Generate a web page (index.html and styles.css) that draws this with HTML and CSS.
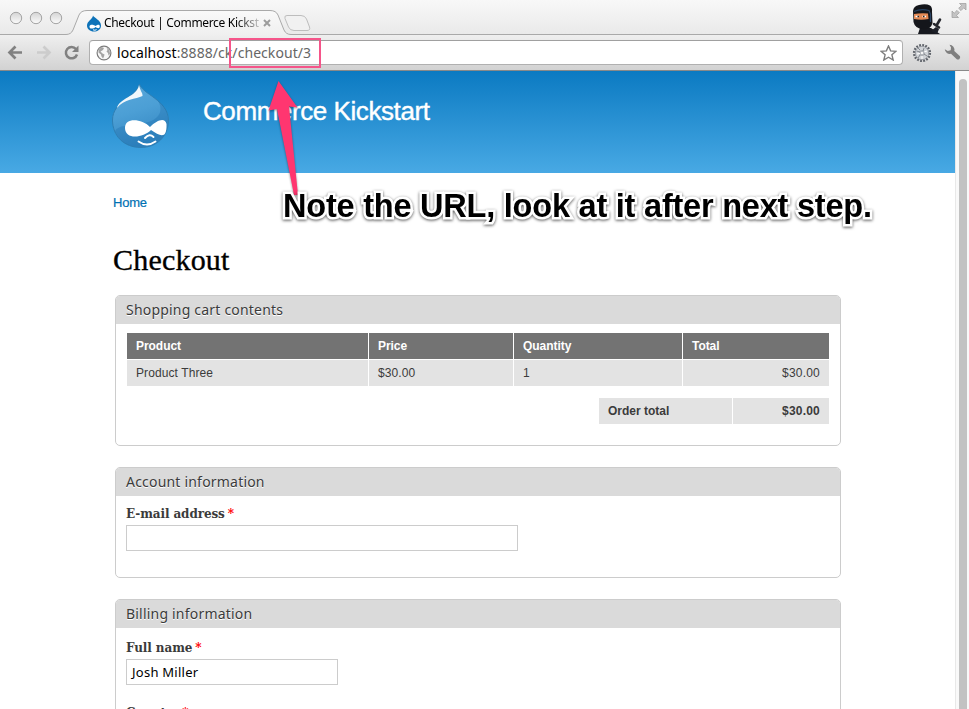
FILE: index.html
```html
<!DOCTYPE html>
<html lang="en">
<head>
<meta charset="utf-8">
<title>Checkout | Commerce Kickstart</title>
<link rel="stylesheet" href="styles.css">
</head>
<body>
<div class="window">
  <div class="tabstrip">
    <svg class="tabshape" width="969" height="36" viewBox="0 0 969 36">
      <defs><linearGradient id="tab" x1="0" y1="0" x2="0" y2="1"><stop offset="0" stop-color="#f9f9f9"/><stop offset="1" stop-color="#efefef"/></linearGradient>
      <linearGradient id="lamp" x1="0" y1="0" x2="0" y2="1"><stop offset="0" stop-color="#d4d4d4"/><stop offset="1" stop-color="#fcfcfc"/></linearGradient></defs>
      <path d="M0 34.5H66Q71 34.5 73 30L79 15Q81 10.500 87 10.500H270Q276 10.500 278 15L284 30Q286 34.500 291 34.500H969V36H0Z" fill="url(#tab)"/>
      <path d="M0 34.500H66Q71 34.500 73 30L79 15Q81 10.500 87 10.500H270Q276 10.500 278 15L284 30Q286 34.500 291 34.500H969" fill="none" stroke="#a9a9a9"/>
      <path d="M287 15.500H301Q305 15.500 306.500 19L309.500 27Q310.500 30.500 307 30.500H294Q290 30.500 288.500 27L285 18.500Q284 15.500 287 15.500Z" fill="#f1f1f1" stroke="#bdbdbd"/>
      <g fill="url(#lamp)" stroke="#a4a4a4"><circle cx="16" cy="18" r="5.700"/><circle cx="36" cy="18" r="5.700"/><circle cx="56" cy="18" r="5.700"/></g>
    </svg>
    <div class="tab">
      <svg class="favicon" width="16" height="17" viewBox="0 0 16 17"><path d="M7 .5C8 3 15 5 15 10.500C15 14.500 11.500 16.500 8 16.500C4 16.500 1 14 1 10.500C1 6 6.500 4.500 7 .5Z" fill="#0e73b9"/><path d="M3.500 11.700c0-3 4.500-2.300 6-.6 1.500-1.500 4.500-2.400 4.300.4-.2 2.700-2.800 1.600-4.300.5-1.600 1.700-6 2.600-6-.3Z" fill="#fff"/><path d="M7 14.800q2 1 3.600-.2" stroke="#fff" fill="none"/></svg>
      <span class="tabtitle">Checkout | Commerce Kickst</span>
      <svg class="close" width="8" height="8" viewBox="0 0 8 8"><path d="M1 1L7 7M7 1L1 7" stroke="#9c9c9c" stroke-width="2"/></svg>
    </div>
    <svg class="ninja" width="34" height="35" viewBox="0 0 34 35">
      <path d="M7 34L9 28H20L29 34Z" fill="#17191f"/>
      <path d="M20 31L25 27L28 29L26 34" fill="#1c1f27"/>
      <path d="M23 24L28 27.500M25.500 25.500L29 19.500" stroke="#24262c" stroke-width="2.600" stroke-linecap="round"/>
      <path d="M2 11Q2.500 6 8 5Q15 3.500 19 5.500Q21.500 7 21 12L21.500 23Q20 29 13 29.500Q4 29 2.500 22Z" fill="#14161b"/>
      <path d="M3 14Q9 13 17 13.500L17.500 19Q10 20.500 3 19Z" fill="#e58a55"/>
      <path d="M4.500 16.500H8M11.500 16.500H15" stroke="#fff" stroke-width="1.600"/><path d="M6.500 16.500H8M12 16.500H13.500" stroke="#222" stroke-width="1.600"/>
      <path d="M3 11.500Q10 8.500 18 10.500L19.500 14V22" stroke="#294363" stroke-width="1.200" fill="none"/>
    </svg>
    <svg class="expand" width="16" height="15" viewBox="0 0 16 15"><path d="M8.500.5H15V7L12.800 4.800L10 7.600L7.700 5.300L10.600 2.500ZM1 8L3.200 10.200L6 7.400L8.300 9.700L5.400 12.500L7.500 14.500H1Z" fill="#c4c4c4" stroke="#9b9b9b" stroke-width=".7"/></svg>
  </div>
  <div class="toolbar">
    <svg class="nav" width="90" height="35" viewBox="0 0 90 35">
      <path d="M22 17.500H10M15.500 11.500L9.500 17.500L15.500 23.500" fill="none" stroke="#818181" stroke-width="2.700"/>
      <path d="M37 17.500H49M43.500 11.500L49.500 17.500L43.500 23.500" fill="none" stroke="#cccccc" stroke-width="2.700"/>
      <path d="M76 14A5.700 5.700 0 1 0 77 19.500" fill="none" stroke="#818181" stroke-width="2.500"/><path d="M78.500 10.500V17H72Z" fill="#818181"/>
    </svg>
    <div class="omnibox">
      <svg class="globe" width="16" height="16" viewBox="0 0 16 16"><circle cx="8" cy="8" r="6.900" fill="#f7f7f7" stroke="#7c7c7c" stroke-width="1.200"/><path d="M2.500 5L5.500 2L8 3L7 5L4.500 6.500L6.500 8.500L8.500 9.500L8 11.500L7 13.500L5.500 11.500L5 9.500L2.500 7.500ZM10.500 2.500L13.500 5L14 9L12.500 10.500L12 8L10.500 6.500L11.500 5Z" fill="#a4a4a4"/></svg>
      <span class="url"><b>localhost</b>:8888/ck/checkout/3</span>
      <svg class="star" width="17" height="16" viewBox="0 0 17 16"><path d="M8.500 1L10.600 5.900L16 6.300L11.900 9.800L13.200 15L8.500 12.200L3.800 15L5.100 9.800L1 6.300L6.400 5.900Z" fill="#fff" stroke="#7c7c7c" stroke-width="1.400"/></svg>
    </div>
    <svg class="gear" width="20" height="20" viewBox="0 0 20 20"><circle cx="10" cy="10" r="7.800" fill="none" stroke="#5f636a" stroke-width="2.600" stroke-dasharray="1.800 1.263"/><circle cx="10" cy="10" r="6.700" fill="#d0d3d7" stroke="#8d9198" stroke-width=".8"/><circle cx="10" cy="10" r="3" fill="#a9adb3"/><path d="M4.500 8L8 9M12 11L15 13M12 5L11 8M8 12L6 15M6 5L8 7" stroke="#85898f"/><path d="M5 11L8 10.500M12 9L15 8M10 13V16" stroke="#fff"/><circle cx="10" cy="10" r="1.300" fill="#f4f4f4"/></svg>
    <svg class="wrench" width="17" height="17" viewBox="0 0 17 17"><path d="M5.500.8A5 5 0 0 1 10.300 7L16 12.300Q16.700 14 15.200 15.200Q13.700 16 12.500 15L7 9.800A5 5 0 0 1 .8 5.200L3.800 7L6.700 6.300L7 3.500Z" fill="#7f7f7f"/></svg>
  </div>
  <div class="viewport">
    <main class="page">
      <header class="header">
        <svg class="logo" width="60" height="66" viewBox="0 0 60 66">
          <defs><linearGradient id="drop" x1="0" y1="0" x2=".3" y2="1"><stop offset="0" stop-color="#5aa9dc"/><stop offset=".5" stop-color="#4c9fd5"/><stop offset="1" stop-color="#3487c2"/></linearGradient></defs>
          <path d="M28.500 1C31 11 57 17 57.500 37C57.500 54 45 64.500 30 64.500C13 64.500 1.500 53 1.500 37C1.500 18 26 14 28.500 1Z" fill="url(#drop)" stroke="#2f7fb3"/>
          <path d="M47 18C53 28 48 37 34 40C18 43 7 42 4 48C9 60 18 64 30 64C45 64 57 54 57 37C57 29 53 22 47 18Z" fill="#1c70ae" opacity=".35"/>
          <path d="M28 2C29 8 32 10 31.500 13C25 16 13 16 6 25C8 15 26 14 28 2Z" fill="#fff" opacity=".92"/>
          <path d="M14 45C14 34 31 36 39 44C46 37 54 34 55.500 41C56 57 49 53 40 47C32 55 14 57 14 45Z" fill="#fff"/>
          <path d="M34 55Q38.500 50 42.500 54M27.500 58.500Q36 64.500 44.500 58.500" fill="none" stroke="#fff" stroke-width="1.900" stroke-linecap="round"/>
        </svg>
        <div class="sitename">Commerce Kickstart</div>
      </header>
      <div class="content">
        <nav class="crumb"><a>Home</a></nav>
        <h1>Checkout</h1>
        <section class="fieldset cart">
          <h2>Shopping cart contents</h2>
          <div class="body">
            <div class="row head"><div>Product</div><div>Price</div><div>Quantity</div><div>Total</div></div>
            <div class="row"><div>Product Three</div><div>$30.00</div><div>1</div><div class="num">$30.00</div></div>
            <div class="total"><div>Order total</div><div class="num">$30.00</div></div>
          </div>
        </section>
        <section class="fieldset account">
          <h2>Account information</h2>
          <div class="body"><label>E-mail address <i>*</i></label><div class="input wide"></div></div>
        </section>
        <section class="fieldset billing">
          <h2>Billing information</h2>
          <div class="body"><label class="name">Full name <i>*</i></label><div class="input">Josh Miller</div><label class="country">Country <i>*</i></label></div>
        </section>
      </div>
    </main>
    <div class="scrollbar"><div class="thumb"></div></div>
  </div>
  <div class="urlmark"></div>
  <svg class="arrow" width="60" height="120" viewBox="0 0 60 120"><path d="M18.500 6L37.500 32.500L29 31.500L38 120H34L17 34L8.500 35.500Z" fill="#ff3670"/></svg>
  <div class="note">Note the URL, look at it after next step.</div>
</div>
</body>
</html>
```
FILE: styles.css
```css
* { box-sizing: border-box; }
body { margin: 0; background: #fff; font-family: "Liberation Sans", sans-serif; }
.window { position: relative; width: 969px; height: 709px; overflow: hidden; display: flex; flex-direction: column; }
.tabstrip { position: relative; height: 35px; flex: none; display: flex; background: linear-gradient(#f8f8f8, #e9e9e9); }
.tabshape { position: absolute; left: 0; top: 0; }
.tab { position: relative; display: flex; align-items: center; margin-left: 86px; margin-top: 11px; height: 24px; width: 186px; }
.favicon { flex: none; }
.tabtitle { font: 12px/16px "Noto Sans", sans-serif; letter-spacing: -0.32px; width: 155px; margin-left: 2px; white-space: nowrap; -webkit-mask-image: linear-gradient(90deg, #000 132px, rgba(0,0,0,.2) 155px); }
.close { flex: none; margin-left: 4px; }
.ninja { position: relative; margin-left: 639px; flex: none; }
.expand { position: relative; margin: 3px 0 0 6px; flex: none; }
.toolbar { position: relative; height: 36px; flex: none; display: flex; align-items: center; background: linear-gradient(#efefef, #d2d2d2); border-bottom: 1px solid #898989; }
.nav { flex: none; }
.omnibox { width: 814px; height: 25px; margin-left: -1px; display: flex; align-items: center; background: #fff; border: 1px solid #b0b0b0; border-top-color: #a0a0a0; border-radius: 4px; padding: 0 5px 0 6px; }
.url { flex: 1; margin-left: 5px; font: 14px/20px "Noto Sans", sans-serif; letter-spacing: .06px; color: #666; }
.url b { font-weight: 400; color: #000; }
.gear { margin-left: 9px; }
.wrench { margin-left: 12px; }
.viewport { flex: 1; display: flex; min-height: 0; }
.page { width: 955px; overflow: hidden; }
.header { height: 102px; display: flex; padding: 12px 0 0 111px; background: linear-gradient(#0b7ac2, #48a9e4); }
.sitename { margin: 13px 0 0 32px; font-size: 26px; line-height: 30px; letter-spacing: -.42px; color: #fff; white-space: nowrap; -webkit-text-stroke: .4px #fff; }
.content { padding: 21px 114px 0 115px; }
.crumb { margin-left: -2px; height: 18px; font-size: 13px; line-height: 18px; letter-spacing: -.2px; color: #0071b3; -webkit-text-stroke: .2px #0071b3; }
h1 { margin: 30px 0 0 -2px; height: 36px; font: 400 30px/36px "Liberation Serif", serif; letter-spacing: .2px; color: #000; -webkit-text-stroke: .35px #000; }
.fieldset { border: 1px solid #ccc; border-radius: 5px; overflow: hidden; margin-bottom: 21px; }
.cart { margin-top: 17px; height: 151px; }
.account { height: 111px; }
.billing { height: 180px; margin: 0; }
h2 { margin: 0; height: 28px; padding-left: 10px; background: #dadada; font: 400 14px/28px "Noto Sans", sans-serif; letter-spacing: .2px; color: #3b3b3b; text-shadow: 0 1px 0 #fff; }
.body { padding: 9px 11px 0 10px; }
.row { display: grid; grid-template-columns: 241px 144px 168px 146px; column-gap: 1px; margin-left: 1px; margin-bottom: 1px; font-size: 12px; line-height: 26px; letter-spacing: .1px; color: #3b3b3b; }
.row div { height: 26px; padding: 0 9px; background: #e3e3e3; }
.row.head { font-weight: 700; color: #fff; letter-spacing: -.05px; }
.row.head div { background: #737373; }
.row .num, .total .num { text-align: right; letter-spacing: .2px; }
.total { display: grid; grid-template-columns: 133px 96px; column-gap: 1px; justify-content: end; margin-top: 12px; font-size: 12px; font-weight: 700; line-height: 26px; color: #3b3b3b; }
.total div { background: #e3e3e3; padding: 0 9px; height: 26px; }
label { display: block; height: 20px; font: 700 12px/18px "DejaVu Serif", serif; letter-spacing: -.1px; color: #3b3b3b; white-space: nowrap; }
label i { font-style: normal; color: #f00; margin-left: -1px; }
label.name { padding-top: 2px; height: 22px; }
label.country { margin-top: 19px; }
.input { width: 212px; height: 26px; border: 1px solid #ccc; padding-left: 5px; font: 13px/25px "Noto Sans", sans-serif; letter-spacing: .25px; color: #000; }
.input.wide { width: 392px; }
.scrollbar { width: 14px; padding: 8px 2px 0 3px; background: #f9f9f9; border-left: 1px solid #e8e8e8; }
.thumb { height: 640px; width: 8px; border-radius: 4px; background: #c2c2c2; }
.urlmark { position: absolute; left: 229px; top: 38px; width: 92px; height: 30px; border: 2px solid #f5558a; }
.arrow { position: absolute; left: 260px; top: 75px; filter: drop-shadow(0 1px 1px rgba(0,0,0,.4)); }
.note { position: absolute; left: 283px; top: 187px; font-weight: 700; font-size: 32.5px; line-height: 38px; letter-spacing: -.22px; white-space: nowrap; color: #000; -webkit-text-stroke: 5px #fff; paint-order: stroke fill; filter: drop-shadow(0 1px 1.5px rgba(0,0,0,.65)); }
```
